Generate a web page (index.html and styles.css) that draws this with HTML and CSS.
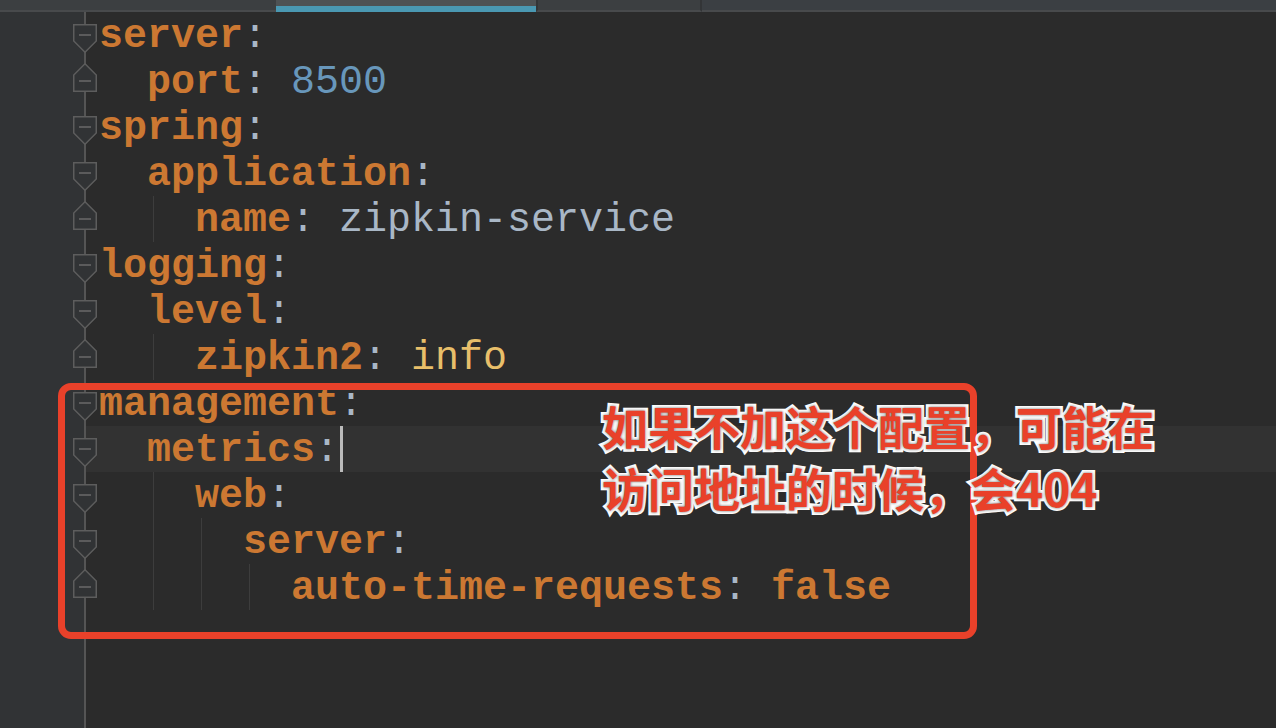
FILE: index.html
```html
<!DOCTYPE html>
<html lang="en">
<head>
    <meta charset="UTF-8">
    <title>application.yml</title>
    <link rel="stylesheet" href="styles.css">
</head>
<body>

    <!-- Tab strip (scrolled off the top) -->
    <div class="tabs">
        <div class="tab first"></div>
        <div class="tab active"></div>
        <div class="tab"></div>
        <div class="tab-rest"></div>
    </div>

    <!-- Editor -->
    <div class="editor">
        <div class="gutter">
            <div class="fold"><svg viewBox="0 0 24 46"><path class="shape" d="M0.75 12.75H23.25V29L12 40.25L0.75 29Z"/><path class="minus" d="M6 23H18"/></svg></div>
            <div class="fold"><svg viewBox="0 0 24 46"><path class="shape" d="M12 5.75L23.25 17V33.25H0.75V17Z"/><path class="minus" d="M6 23H18"/></svg></div>
            <div class="fold"><svg viewBox="0 0 24 46"><path class="shape" d="M0.75 12.75H23.25V29L12 40.25L0.75 29Z"/><path class="minus" d="M6 23H18"/></svg></div>
            <div class="fold"><svg viewBox="0 0 24 46"><path class="shape" d="M0.75 12.75H23.25V29L12 40.25L0.75 29Z"/><path class="minus" d="M6 23H18"/></svg></div>
            <div class="fold"><svg viewBox="0 0 24 46"><path class="shape" d="M12 5.75L23.25 17V33.25H0.75V17Z"/><path class="minus" d="M6 23H18"/></svg></div>
            <div class="fold"><svg viewBox="0 0 24 46"><path class="shape" d="M0.75 12.75H23.25V29L12 40.25L0.75 29Z"/><path class="minus" d="M6 23H18"/></svg></div>
            <div class="fold"><svg viewBox="0 0 24 46"><path class="shape" d="M0.75 12.75H23.25V29L12 40.25L0.75 29Z"/><path class="minus" d="M6 23H18"/></svg></div>
            <div class="fold"><svg viewBox="0 0 24 46"><path class="shape" d="M12 5.75L23.25 17V33.25H0.75V17Z"/><path class="minus" d="M6 23H18"/></svg></div>
            <div class="fold"><svg viewBox="0 0 24 46"><path class="shape" d="M0.75 12.75H23.25V29L12 40.25L0.75 29Z"/><path class="minus" d="M6 23H18"/></svg></div>
            <div class="fold"><svg viewBox="0 0 24 46"><path class="shape" d="M0.75 12.75H23.25V29L12 40.25L0.75 29Z"/><path class="minus" d="M6 23H18"/></svg></div>
            <div class="fold"><svg viewBox="0 0 24 46"><path class="shape" d="M0.75 12.75H23.25V29L12 40.25L0.75 29Z"/><path class="minus" d="M6 23H18"/></svg></div>
            <div class="fold"><svg viewBox="0 0 24 46"><path class="shape" d="M0.75 12.75H23.25V29L12 40.25L0.75 29Z"/><path class="minus" d="M6 23H18"/></svg></div>
            <div class="fold"><svg viewBox="0 0 24 46"><path class="shape" d="M12 5.75L23.25 17V33.25H0.75V17Z"/><path class="minus" d="M6 23H18"/></svg></div>
        </div>

        <div class="code">
            <div class="line"><span class="key">server</span><span class="colon">:</span></div>
            <div class="line"><span class="ind">  </span><span class="key">port</span><span class="colon">: </span><span class="num">8500</span></div>
            <div class="line"><span class="key">spring</span><span class="colon">:</span></div>
            <div class="line"><span class="ind">  </span><span class="key">application</span><span class="colon">:</span></div>
            <div class="line"><span class="ind">  </span><span class="ind guide">  </span><span class="key">name</span><span class="colon">: </span><span class="plain">zipkin-service</span></div>
            <div class="line"><span class="key">logging</span><span class="colon">:</span></div>
            <div class="line"><span class="ind">  </span><span class="key">level</span><span class="colon">:</span></div>
            <div class="line"><span class="ind">  </span><span class="ind guide">  </span><span class="key">zipkin2</span><span class="colon">: </span><span class="val">info</span></div>
            <div class="line"><span class="key">management</span><span class="colon">:</span></div>
            <div class="line current"><span class="ind">  </span><span class="key">metrics</span><span class="colon">:</span><span class="caret"></span></div>
            <div class="line"><span class="ind">  </span><span class="ind guide">  </span><span class="key">web</span><span class="colon">:</span></div>
            <div class="line"><span class="ind">  </span><span class="ind guide">  </span><span class="ind guide">  </span><span class="key">server</span><span class="colon">:</span></div>
            <div class="line"><span class="ind">  </span><span class="ind guide">  </span><span class="ind guide">  </span><span class="ind guide">  </span><span class="key">auto-time-requests</span><span class="colon">: </span><span class="key">false</span></div>
        </div>

        <!-- Screenshot annotation -->
        <div class="note-box"></div>
        <div class="note-text">如果不加这个配置，可能在<br>访问地址的时候，会404</div>
    </div>

</body>
</html>
```

FILE: styles.css
```css
body {
    margin: 0;
    padding: 0;
    background-color: #2b2b2b;
    font-family: 'Liberation Mono', monospace;
    overflow: hidden;
    height: 728px;
}

/* Tabs */
.tabs {
    display: flex;
    height: 12px;
    background: #3c3f41;
    overflow: hidden;
}

.tab {
    height: 10px;
    border-bottom: 2px solid #484a4c;
    background: #3c3f41;
}

.tab.first {
    width: 276px;
}

.tab.active {
    width: 260px;
    height: 6px;
    background: #4e5254;
    border-bottom: 6px solid #4a98b2;
}

.tab:nth-child(3) {
    width: 162px;
    border-left: 2px solid #333537;
    border-right: 2px solid #333537;
}

.tab-rest {
    flex: 1;
    height: 10px;
    background: #3b3f43;
    border-bottom: 2px solid #484a4c;
}

/* Editor */
.editor {
    display: flex;
    position: relative;
    height: 716px;
}

.gutter {
    width: 84px;
    border-right: 2px solid #555555;
    background: #313335;
    position: relative;
    z-index: 1;
}

.fold {
    height: 46px;
    margin-left: 73px;
}

.fold svg {
    display: block;
    width: 24px;
    height: 46px;
    overflow: visible;
}

.fold .shape {
    fill: #313335;
    stroke: #5d5d5d;
    stroke-width: 1.5;
}

.fold .minus {
    stroke: #6a6a6a;
    stroke-width: 1.5;
}

.code {
    flex: 1;
}

.line {
    display: flex;
    height: 46px;
    padding-left: 13px;
    font-size: 40px;
    white-space: pre;
}

.line span {
    padding-top: 3px;
    line-height: 43px;
}

.line.current {
    background: #323232;
}

.line .ind {
    width: 48px;
}

.line .guide {
    background: linear-gradient(#3d3d3d, #3d3d3d) no-repeat 6px 0 / 1px 100%;
}

.key {
    color: #cc7832;
    font-weight: bold;
}

.colon {
    color: #a9b7c6;
}

.num {
    color: #6897bb;
}

.plain {
    color: #a9b7c6;
}

.val {
    color: #e8bf6a;
}

.line .caret {
    width: 3px;
    padding: 0;
    margin-left: 1px;
    background: #bbbbbb;
}

/* Annotation */
.note-box {
    position: absolute;
    left: 58px;
    top: 371px;
    z-index: 2;
    width: 919px;
    height: 256px;
    box-sizing: border-box;
    border: 7px solid #e9412a;
    border-radius: 13px;
}

.note-text {
    position: absolute;
    left: 602px;
    top: 382px;
    z-index: 2;
    font-family: 'Noto Sans CJK SC', sans-serif;
    font-weight: bold;
    font-size: 46px;
    line-height: 62px;
    color: #e9412a;
    -webkit-text-stroke: 6px #ffffff;
    paint-order: stroke fill;
    text-shadow: 0 0 3px rgba(0, 0, 0, 0.6);
    white-space: nowrap;
}
```
